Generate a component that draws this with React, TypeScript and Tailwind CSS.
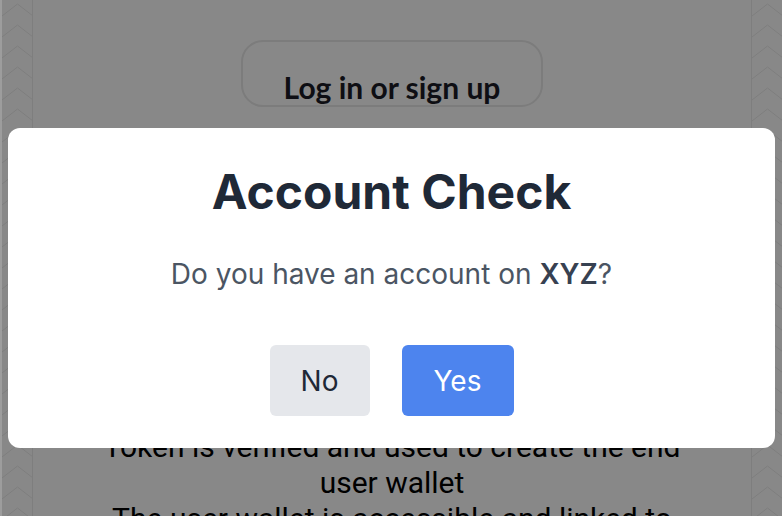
import React from 'react';

function ChevronStrip() {
  return (
    <svg className="h-full w-full" preserveAspectRatio="none">
      <defs>
        <pattern id="chev" width="31" height="21" patternUnits="userSpaceOnUse">
          <path d="M0 16 L15.5 4 L31 16" fill="none" stroke="#ececec" strokeWidth="1" />
        </pattern>
      </defs>
      <rect width="100%" height="100%" fill="url(#chev)" />
    </svg>
  );
}

function BackgroundPage() {
  return (
    <div className="flex h-[516px] w-full overflow-hidden bg-white">
      <div className="w-[2px] shrink-0" />
      <div className="h-full w-[31px] shrink-0 border-r border-[#ededed]">
        <ChevronStrip />
      </div>
      <div className="flex flex-1 flex-col items-center pt-[40px]">
        <div
          className="flex h-[96px] w-[302px] items-start justify-center rounded-[22px] border-2 border-[#e8e8e8] pt-[27px] text-[30px] font-bold leading-[36px] text-[#1c1c26]"
          style={{ fontFamily: 'Lato, "Open Sans", sans-serif' }}
        >
          Log in or sign up
        </div>
        <div
          className="mt-[322px] text-center text-[30px] leading-[36px] text-black"
          style={{ fontFamily: 'Roboto, "Liberation Sans", sans-serif' }}
        >
          <p>Token is verified and used to create the end</p>
          <p>user wallet</p>
          <p>The user wallet is accessible and linked to</p>
        </div>
      </div>
      <div className="h-full w-[31px] shrink-0 border-l border-[#ededed]">
        <ChevronStrip />
      </div>
    </div>
  );
}

export default function App() {
  return (
    <div className="relative h-[516px] w-[782px] overflow-hidden" style={{ fontFamily: 'Inter, "Liberation Sans", sans-serif' }}>
      <BackgroundPage />

      {/* overlay */}
      <div className="absolute inset-0 bg-[rgba(0,0,0,0.467)]">
        <div className="absolute left-0 top-0 h-full w-[2px] bg-[#9d9d9d]" />
        <div className="ml-[8px] mr-[7px] mt-[128px] flex h-[320px] flex-col items-center rounded-[12px] bg-white pt-[36px]">
          <h2 className="text-[48px] font-bold leading-[56px] text-[#1f2937]">Account Check</h2>
          <p className="mt-[36px] text-[28px] leading-[36px] text-[#4b5563]">
            Do you have an account on <span className="font-semibold text-[#374151]">XYZ</span>?
          </p>
          <div className="mt-[53px] flex gap-[32px]">
            <button className="h-[71px] w-[100px] rounded-[6px] bg-[#e5e7eb] text-[28px] text-[#1f2937]">No</button>
            <button className="h-[71px] w-[112px] rounded-[6px] bg-[#4d84ee] text-[28px] text-white">Yes</button>
          </div>
        </div>
      </div>
    </div>
  );
}
